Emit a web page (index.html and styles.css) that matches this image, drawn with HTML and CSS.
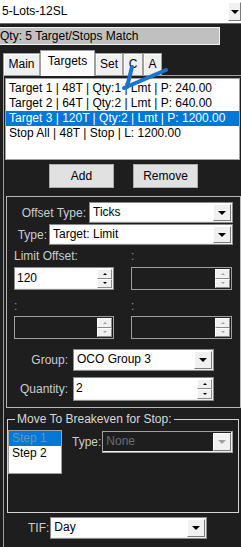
FILE: index.html
```html
<!DOCTYPE html>
<html lang="en">
<head>
    <meta charset="UTF-8">
    <title>Order Template - Targets</title>
    <link rel="stylesheet" href="styles.css">
</head>
<body>
    <div class="combo combo-top">
        <span class="value">5-Lots-12SL</span>
        <span class="drop"></span>
    </div>
    <div class="qty">Qty: 5 Target/Stops Match</div>

    <div class="tabs">
        <div class="tab tab-main">Main</div>
        <div class="tab tab-targets active">Targets</div>
        <div class="tab tab-set">Set</div>
        <div class="tab tab-c">C</div>
        <div class="tab tab-a">A</div>
    </div>

    <div class="page">
        <ul class="list">
            <li>Target 1 | 48T | Qty:1 | Lmt | P: 240.00</li>
            <li>Target 2 | 64T | Qty:2 | Lmt | P: 640.00</li>
            <li class="sel">Target 3 | 120T | Qty:2 | Lmt | P: 1200.00</li>
            <li>Stop All | 48T | Stop | L: 1200.00</li>
        </ul>

        <div class="buttons">
            <button>Add</button>
            <button>Remove</button>
        </div>

        <div class="panel">
            <div class="field">
                <label>Offset Type:</label>
                <div class="combo w-offset"><span class="value">Ticks</span><span class="drop"></span></div>
            </div>
            <div class="field field-type">
                <label>Type:</label>
                <div class="combo w-type"><span class="value">Target: Limit</span><span class="drop"></span></div>
            </div>

            <div class="pair pair-labels">
                <label>Limit Offset:</label>
                <label class="dim">:</label>
            </div>
            <div class="pair pair-spins">
                <div class="spin"><span class="value">120</span><span class="arrows"><i class="up"></i><i class="down"></i></span></div>
                <div class="spin off"><span class="value"></span><span class="arrows"><i class="up"></i><i class="down"></i></span></div>
            </div>

            <div class="pair pair-labels pair-colons">
                <label class="dim">:</label>
                <label class="dim">:</label>
            </div>
            <div class="pair pair-spins pair-spins2">
                <div class="spin off"><span class="value"></span><span class="arrows"><i class="up"></i><i class="down"></i></span></div>
                <div class="spin off"><span class="value"></span><span class="arrows"><i class="up"></i><i class="down"></i></span></div>
            </div>

            <div class="field narrow field-group">
                <label>Group:</label>
                <div class="combo w-group"><span class="value">OCO Group 3</span><span class="drop"></span></div>
            </div>
            <div class="field narrow field-qty">
                <label>Quantity:</label>
                <div class="spin w-group"><span class="value">2</span><span class="arrows"><i class="up"></i><i class="down"></i></span></div>
            </div>
        </div>

        <fieldset class="group">
            <legend>Move To Breakeven for Stop:</legend>
            <div class="group-inner">
                <ul class="steps">
                    <li class="sel">Step 1</li>
                    <li>Step 2</li>
                </ul>
                <div class="be-field">
                    <label>Type:</label>
                    <div class="combo off w-none"><span class="value">None</span><span class="drop"></span></div>
                </div>
            </div>
        </fieldset>

        <div class="field tif">
            <label>TIF:</label>
            <div class="combo w-tif"><span class="value">Day</span><span class="drop"></span></div>
        </div>
    </div>

    <!-- hand-drawn annotation over the list -->
    <svg class="mark" width="241" height="547" viewBox="0 0 241 547">
        <path d="M132 67 L127 87 M124 88 L166 70" fill="none" stroke="#1a73cc" stroke-width="4" stroke-linecap="round"/>
    </svg>
</body>
</html>
```

FILE: styles.css
```css
body {
    margin: 0;
    width: 241px;
    height: 547px;
    overflow: hidden;
    position: relative;
    background: #1e1e1e;
    font: 12px/14px "Liberation Sans", Arial, sans-serif;
    color: #000;
}

label {
    color: #c9cdd3;
    white-space: nowrap;
}

label.dim {
    color: #8094ab;
}

/* combo boxes */
.combo {
    display: flex;
    height: 21px;
    box-sizing: border-box;
    background: #fff;
    border: 1px solid #8a8a8a;
    box-shadow: inset -1px -1px 0 #f0f0f0;
}

.combo .value {
    flex: 1;
    padding-left: 3px;
    line-height: 19px;
    white-space: nowrap;
    overflow: hidden;
}

.combo .drop {
    width: 16px;
    margin: 1px;
    background: #f0f0f0;
    border: 1px solid #fff;
    border-right-color: #7a7a7a;
    border-bottom-color: #7a7a7a;
    display: flex;
    align-items: center;
    justify-content: center;
}

.combo .drop::after {
    content: "";
    border-left: 4px solid transparent;
    border-right: 4px solid transparent;
    border-top: 4px solid #000;
}

.combo.off {
    background: #1e1e1e;
    border-color: #a0a0a0;
}

.combo.off .value {
    color: #6d6d6d;
}

.combo.off .drop::after {
    border-top-color: #a0a0a0;
}

.combo-top {
    height: 24px;
    border: none;
    border-bottom: 1px solid #6a6a6a;
    box-shadow: none;
}

.combo-top .value {
    padding-left: 2px;
    line-height: 23px;
}

.combo-top .drop {
    width: 11px;
    margin: 2px 0 2px 0;
}

.qty {
    margin-top: 3px;
    width: 220px;
    height: 18px;
    box-sizing: border-box;
    background: #c0c0c0;
    border: 1px solid #f0f0f0;
    border-left: none;
    line-height: 16px;
    white-space: nowrap;
}

/* tabs */
.tabs {
    display: flex;
    align-items: flex-end;
    height: 25px;
    margin: 5px 0 0 3px;
}

.tab {
    height: 22px;
    box-sizing: border-box;
    background: #f0f0f0;
    border: 1px solid #a0a0a0;
    border-bottom: none;
    box-shadow: inset 1px 1px 0 #fff;
    text-align: center;
    line-height: 20px;
}

.tab.active {
    position: relative;
    z-index: 1;
    height: 26px;
    margin-bottom: -1px;
    background: #fcfcfc;
    line-height: 20px;
}

.tab-main { width: 37px; }
.tab-targets { width: 55px; }
.tab-set { width: 28px; }
.tab-c { width: 20px; }
.tab-a { width: 19px; }

.page {
    margin-left: 3px;
    border-top: 1px solid #a0a0a0;
    border-left: 1px solid #a0a0a0;
    height: 471px;
}

.list {
    margin: 2px 0 0 1px;
    padding: 2px 0 0;
    width: 235px;
    height: 82px;
    box-sizing: border-box;
    background: #fff;
    border: 1px solid #a0a0a0;
    list-style: none;
}

.list li,
.steps li {
    height: 15px;
    line-height: 15px;
    padding-left: 3px;
    white-space: nowrap;
}

.list li.sel {
    background: #0078d7;
    color: #fff;
}

.buttons {
    display: flex;
    gap: 19px;
    margin-top: 4px;
    padding-left: 45px;
}

.buttons button {
    width: 65px;
    height: 24px;
    padding: 0;
    background: #e1e1e1;
    border: 1px solid #adadad;
    font: inherit;
    color: #000;
}

/* settings panel */
.panel {
    margin: 8px 0 0 2px;
    width: 235px;
    box-sizing: border-box;
    border: 1px solid #b8b8b8;
    padding: 5px 7px 6px 0;
}

.field {
    display: flex;
    justify-content: flex-end;
    align-items: center;
    gap: 3px;
}

.field-type {
    margin-top: 1px;
    gap: 2px;
}

.field.narrow {
    padding-right: 19px;
    gap: 5px;
}

.field-group {
    margin-top: 10px;
}

.field-group .combo {
    height: 22px;
}

.field-qty {
    margin-top: 6px;
}

.w-offset { width: 144px; }
.w-type { width: 184px; }
.w-group { width: 141px; }
.w-none { width: 131px; height: 22px; }
.w-tif { width: 157px; height: 22px; }

.pair {
    display: grid;
    grid-template-columns: 100px 101px;
    column-gap: 17px;
    padding-left: 7px;
}

.pair-labels {
    margin-top: 4px;
}

.pair-colons {
    margin-top: 9px;
}

.pair-spins {
    margin-top: 4px;
}

.pair-spins2 {
    margin-top: 3px;
}

/* numeric up/down */
.spin {
    display: flex;
    height: 23px;
    box-sizing: border-box;
    background: #fff;
    border: 1px solid #8a8a8a;
    box-shadow: inset -1px -1px 0 #f0f0f0;
}

.spin .value {
    flex: 1;
    padding-left: 2px;
    line-height: 21px;
}

.spin .arrows {
    width: 15px;
    margin: 1px 1px 1px 0;
    display: flex;
    flex-direction: column;
}

.spin .arrows i {
    flex: 1;
    background: #f0f0f0;
    border: 1px solid #fff;
    border-right-color: #8a8a8a;
    border-bottom-color: #8a8a8a;
    display: flex;
    align-items: center;
    justify-content: center;
}

.spin .arrows i::after {
    content: "";
    border-left: 2px solid transparent;
    border-right: 2px solid transparent;
}

.spin .arrows .up::after {
    border-bottom: 2px solid #000;
}

.spin .arrows .down::after {
    border-top: 2px solid #000;
}

.spin.off {
    background: #1e1e1e;
    border-color: #a0a0a0;
    box-shadow: none;
}

.spin.off .arrows .up::after {
    border-bottom-color: #a0a0a0;
}

.spin.off .arrows .down::after {
    border-top-color: #a0a0a0;
}

.field-qty .spin {
    height: 24px;
}

/* breakeven group */
.group {
    margin: 4px 0 0 3px;
    width: 232px;
    min-width: 0;
    box-sizing: border-box;
    padding: 4px 0 0;
    border: 1px solid #d4d4d4;
}

.group legend {
    margin-left: 7px;
    padding: 0 2px;
    color: #d8d8d8;
    line-height: 14px;
}

.group-inner {
    display: flex;
    align-items: flex-start;
    height: 82px;
}

.steps {
    width: 54px;
    height: 44px;
    box-sizing: border-box;
    margin: 0;
    padding: 0;
    list-style: none;
    background: #fff;
    border: 1px solid #a0a0a0;
}

.steps li {
    padding-left: 3px;
}

.steps li.sel {
    background: #0078d7;
    color: #6d93bd;
}

.be-field {
    display: flex;
    align-items: center;
    gap: 1px;
    margin: 1px 0 0 10px;
}

.tif {
    justify-content: flex-start;
    gap: 1px;
    margin-top: 4px;
    padding-left: 24px;
}

.mark {
    position: absolute;
    left: 0;
    top: 0;
    pointer-events: none;
}
```
